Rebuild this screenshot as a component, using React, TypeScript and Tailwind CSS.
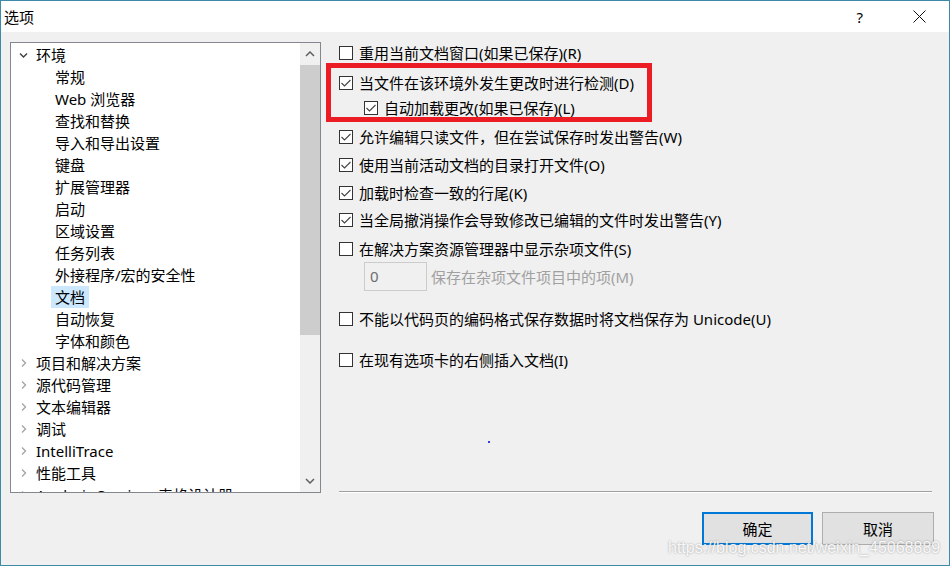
import React from "react";

type TreeItem = {
  label: string;
  level: 0 | 1;
  open?: boolean;
  selected?: boolean;
};

const treeItems: TreeItem[] = [
  { label: "环境", level: 0, open: true },
  { label: "常规", level: 1 },
  { label: "Web 浏览器", level: 1 },
  { label: "查找和替换", level: 1 },
  { label: "导入和导出设置", level: 1 },
  { label: "键盘", level: 1 },
  { label: "扩展管理器", level: 1 },
  { label: "启动", level: 1 },
  { label: "区域设置", level: 1 },
  { label: "任务列表", level: 1 },
  { label: "外接程序/宏的安全性", level: 1 },
  { label: "文档", level: 1, selected: true },
  { label: "自动恢复", level: 1 },
  { label: "字体和颜色", level: 1 },
  { label: "项目和解决方案", level: 0 },
  { label: "源代码管理", level: 0 },
  { label: "文本编辑器", level: 0 },
  { label: "调试", level: 0 },
  { label: "IntelliTrace", level: 0 },
  { label: "性能工具", level: 0 },
  { label: "Analysis Services 表格设计器", level: 0 },
];

const Chevron = ({ open }: { open?: boolean }) =>
  open ? (
    <svg width="9" height="10" viewBox="0 0 9 10" className="shrink-0">
      <path d="M1 3.5 L4.5 7 L8 3.5" fill="none" stroke="#404040" strokeWidth="1.4" />
    </svg>
  ) : (
    <svg width="9" height="10" viewBox="0 0 9 10" className="shrink-0">
      <path d="M3 1.5 L6.5 5 L3 8.5" fill="none" stroke="#a6a6a6" strokeWidth="1.4" />
    </svg>
  );

const TreeRow = ({ item }: { item: TreeItem }) =>
  item.level === 0 ? (
    <div className="h-[22px] flex items-center pl-[8px] whitespace-nowrap">
      <Chevron open={item.open} />
      <span className="ml-[4px] px-1 leading-[22px]">{item.label}</span>
    </div>
  ) : (
    <div className="h-[22px] flex items-center pl-[40px] whitespace-nowrap">
      <span className={`px-1 leading-[22px] ${item.selected ? "bg-[#cce8ff]" : ""}`}>{item.label}</span>
    </div>
  );

const CheckBox = ({ checked }: { checked?: boolean }) => (
  <span className="w-[14px] h-[14px] border border-[#333333] bg-white flex items-center justify-center shrink-0">
    {checked && (
      <svg width="12" height="12" viewBox="0 0 12 12">
        <path d="M1.5 6 L4.5 9 L10.5 3" fill="none" stroke="#444444" strokeWidth="1.1" />
      </svg>
    )}
  </span>
);

const Option = ({
  label,
  checked,
  indent,
  className = "",
}: {
  label: string;
  checked?: boolean;
  indent?: boolean;
  className?: string;
}) => (
  <div className={`h-[20px] flex items-center whitespace-nowrap ${indent ? "pl-[43px]" : "pl-[18px]"} ${className}`}>
    <CheckBox checked={checked} />
    <span className="ml-[6px] leading-[20px]">{label}</span>
  </div>
);

export default function App() {
  return (
    <div className="relative w-[950px] h-[566px] border border-[#3c89a8] bg-[#f0f0f0] flex flex-col overflow-hidden font-['Noto_Sans','Noto_Sans_CJK_SC',sans-serif] text-[15px] text-black">
      {/* title bar */}
      <div className="h-[31px] bg-white flex items-center pl-[3px] shrink-0">
        <span className="leading-[20px]">选项</span>
        <span className="ml-auto mr-[50px] leading-[20px]">?</span>
        <svg width="13" height="13" viewBox="0 0 13 13" className="mr-[23px]">
          <path d="M0.5 0.5 L12.5 12.5 M12.5 0.5 L0.5 12.5" stroke="#111" strokeWidth="1" />
        </svg>
      </div>

      {/* body */}
      <div className="flex h-[461px] shrink-0">
        {/* tree */}
        <div className="ml-[9px] mt-[10px] w-[311px] h-[451px] border border-[#828790] bg-white flex">
          <div className="flex-1 pt-[1px] overflow-hidden">
            {treeItems.map((item) => (
              <TreeRow key={item.label} item={item} />
            ))}
          </div>
          <div className="w-[20px] bg-[#f0f0f0] flex flex-col">
            <div className="h-[22px] flex items-center justify-center">
              <svg width="10" height="6" viewBox="0 0 10 6">
                <path d="M1 5 L5 1 L9 5" fill="none" stroke="#606060" strokeWidth="1.5" />
              </svg>
            </div>
            <div className="h-[270px] bg-[#cdcdcd]" />
            <div className="flex-1" />
            <div className="h-[22px] flex items-center justify-center">
              <svg width="10" height="6" viewBox="0 0 10 6">
                <path d="M1 1 L5 5 L9 1" fill="none" stroke="#606060" strokeWidth="1.5" />
              </svg>
            </div>
          </div>
        </div>

        {/* options */}
        <div className="flex-1 flex flex-col pt-[11px]">
          <Option label="重用当前文档窗口(如果已保存)(R)" />
          <Option label="当文件在该环境外发生更改时进行检测(D)" checked className="mt-[10px]" />
          <Option label="自动加载更改(如果已保存)(L)" checked indent className="mt-[5px]" />
          <Option label="允许编辑只读文件，但在尝试保存时发出警告(W)" checked className="mt-[9px]" />
          <Option label="使用当前活动文档的目录打开文件(O)" checked className="mt-[8px]" />
          <Option label="加载时检查一致的行尾(K)" checked className="mt-[8px]" />
          <Option label="当全局撤消操作会导致修改已编辑的文件时发出警告(Y)" checked className="mt-[7px]" />
          <Option label="在解决方案资源管理器中显示杂项文件(S)" className="mt-[9px]" />
          <div className="mt-[3px] pl-[43px] flex items-center whitespace-nowrap">
            <div className="w-[63px] h-[29px] border border-[#cccccc] bg-[#f0f0f0] pl-[5px] text-[#6d6d6d] leading-[26px]">0</div>
            <span className="ml-[4px] text-[#a0a0a0] leading-[20px]">保存在杂项文件项目中的项(M)</span>
          </div>
          <Option label="不能以代码页的编码格式保存数据时将文档保存为 Unicode(U)" className="mt-[18px]" />
          <Option label="在现有选项卡的右侧插入文档(I)" className="mt-[21px]" />
          <div className="mt-auto ml-[18px] mr-[17px] h-[2px] border-t border-[#a0a0a0] border-b border-b-white" />
        </div>
      </div>

      {/* buttons */}
      <div className="flex justify-end gap-[9px] pr-[15px] mt-[19px]">
        <button className="w-[111px] h-[33px] border-2 border-[#0078d7] bg-[#e1e1e1] leading-[20px]">确定</button>
        <button className="w-[112px] h-[33px] border border-[#adadad] bg-[#e1e1e1] leading-[20px]">取消</button>
      </div>

      {/* annotation */}
      <div className="absolute left-[325px] top-[62px] w-[326px] h-[59px] border-[5px] border-[#ec1c24]" />
      <div className="absolute left-[487px] top-[440px] w-[2px] h-[2px] bg-[#3b3bdb]" />
      <div className="absolute left-[667px] top-[535px] font-['Liberation_Sans',sans-serif] text-[16px] text-white/90 [text-shadow:0_0_2px_rgba(90,90,90,0.6)] whitespace-nowrap">
        https://blog.csdn.net/weixin_45068889
      </div>
    </div>
  );
}
